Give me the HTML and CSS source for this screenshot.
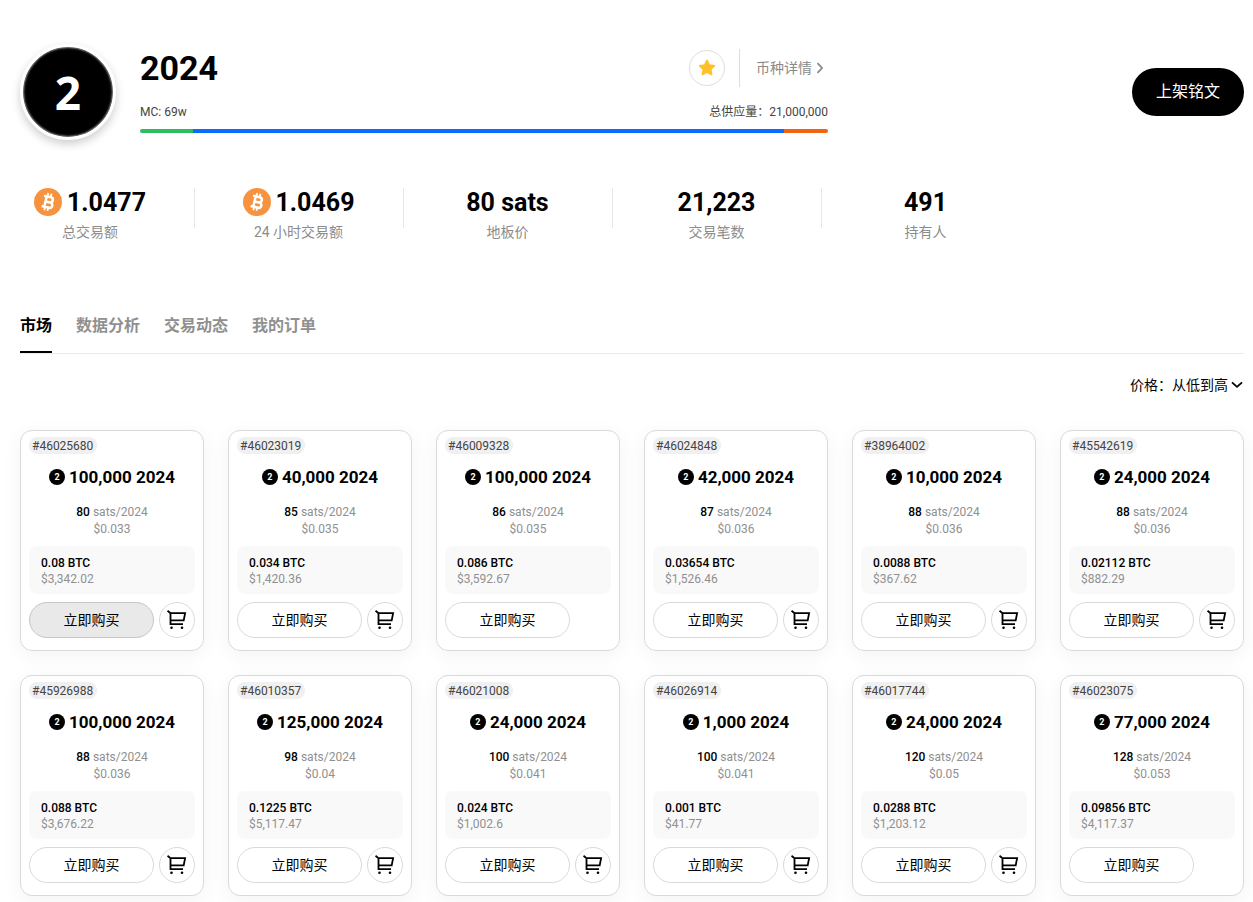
FILE: index.html
```html
<!DOCTYPE html>
<html lang="zh-CN">
<head>
<meta charset="utf-8">
<meta name="viewport" content="width=device-width, initial-scale=1">
<title>2024</title>
<link rel="stylesheet" href="styles.css">
</head>
<body>
<svg class="defs" width="0" height="0" aria-hidden="true">
  <symbol id="cart" viewBox="0 0 20 20">
    <path d="M.5 .8l3 2.400v11h12.500M3.500 3.200h14.600l-1.400 7.100H3.500" fill="none" stroke="currentColor" stroke-width="1.800"/>
    <circle cx="4.500" cy="17.800" r="1.300" fill="currentColor"/><circle cx="15" cy="17.800" r="1.300" fill="currentColor"/>
  </symbol>
  <symbol id="btc" viewBox="0 0 28 28">
    <circle cx="14" cy="14" r="14" fill="#f7923f"/>
    <g transform="rotate(13 14 14) translate(-1.400 -1.400) scale(1.100)" fill="none" stroke="#fff">
      <path d="M9.200 9.200h6.300a2.400 2.400 0 0 1 0 4.800h-3.700M9.200 18.900h6.900a2.450 2.450 0 0 0 0-4.900h-4.300M11.700 9v10" stroke-width="2.300"/>
      <path d="M12.400 6v3M15.400 6v3M12.400 19v3M15.400 19v3" stroke-width="1.600"/>
    </g>
  </symbol>
</svg>
<div class="page">
  <header class="hero">
    <div class="coin-logo">2</div>
    <div class="hero-main">
      <div class="hero-top">
        <h1>2024</h1>
        <button class="star" aria-label="收藏"><svg width="18" height="18" viewBox="0 0 18 18"><path d="M9 1.300l2.300 4.700 5.200.7-3.800 3.600.9 5.200L9 13l-4.600 2.500.9-5.200L1.500 6.700l5.200-.7z" fill="#ffc02a" stroke="#ffc02a" stroke-width="1.600" stroke-linejoin="round"/></svg></button>
        <a class="detail" href="#">币种详情<svg width="8" height="12" viewBox="0 0 8 12"><path d="M1.500 1.200L6 6l-4.500 4.800" fill="none" stroke="currentColor" stroke-width="1.800"/></svg></a>
      </div>
      <div class="meta"><span>MC: 69w</span><span>总供应量：21,000,000</span></div>
      <div class="bar"><i class="bar-green"></i><i class="bar-blue"></i><i class="bar-orange"></i></div>
    </div>
    <button class="list-btn">上架铭文</button>
  </header>

  <section class="stats">
    <div class="stat"><strong><svg width="28" height="28"><use href="#btc"/></svg>1.0477</strong><span>总交易额</span></div>
    <div class="stat"><strong><svg width="28" height="28"><use href="#btc"/></svg>1.0469</strong><span>24 小时交易额</span></div>
    <div class="stat"><strong>80 sats</strong><span>地板价</span></div>
    <div class="stat"><strong>21,223</strong><span>交易笔数</span></div>
    <div class="stat"><strong>491</strong><span>持有人</span></div>
  </section>

  <nav class="tabs">
    <a class="tab active" href="#">市场</a><a class="tab" href="#">数据分析</a><a class="tab" href="#">交易动态</a><a class="tab" href="#">我的订单</a>
  </nav>

  <div class="toolbar">
    <select class="sort" aria-label="排序"><option>价格：从低到高</option><option>价格：从高到低</option></select>
    <svg width="12" height="8" viewBox="0 0 12 8" aria-hidden="true"><path d="M1 1.300l5 4.500 5-4.500" fill="none" stroke="#000" stroke-width="1.800"/></svg>
  </div>

  <main class="grid" id="grid"></main>
</div>
<script src="cards.js"></script>
</body>
</html>
```
FILE: cards.js
```js
// id, amount, unit price in sats, unit price in dollars, total BTC, total dollars, can be added to cart
const listings = [
  ["46025680", "100,000", "80", "0.033", "0.08", "3,342.02", true],
  ["46023019", "40,000", "85", "0.035", "0.034", "1,420.36", true],
  ["46009328", "100,000", "86", "0.035", "0.086", "3,592.67", false],
  ["46024848", "42,000", "87", "0.036", "0.03654", "1,526.46", true],
  ["38964002", "10,000", "88", "0.036", "0.0088", "367.62", true],
  ["45542619", "24,000", "88", "0.036", "0.02112", "882.29", true],
  ["45926988", "100,000", "88", "0.036", "0.088", "3,676.22", true],
  ["46010357", "125,000", "98", "0.04", "0.1225", "5,117.47", true],
  ["46021008", "24,000", "100", "0.041", "0.024", "1,002.6", true],
  ["46026914", "1,000", "100", "0.041", "0.001", "41.77", true],
  ["46017744", "24,000", "120", "0.05", "0.0288", "1,203.12", true],
  ["46023075", "77,000", "128", "0.053", "0.09856", "4,117.37", false]
];

document.getElementById("grid").innerHTML = listings.map(([id, amount, sats, usd, btc, total, cart], i) => `
  <article class="card">
    <span class="tag">#${id}</span>
    <h2><span class="mini-logo">2</span>${amount} 2024</h2>
    <div class="unit"><b>${sats}</b> sats/2024</div>
    <div class="unit">$${usd}</div>
    <div class="total"><b>${btc} BTC</b><span>$${total}</span></div>
    <div class="actions">
      <button class="buy${i === 0 ? " pressed" : ""}">立即购买</button>
      ${cart ? '<button class="cart" aria-label="加入购物车"><svg width="20" height="20"><use href="#cart"/></svg></button>' : '<span class="cart-space"></span>'}
    </div>
  </article>`).join("");
```
FILE: styles.css
```css
* { box-sizing: border-box; }
body {
  margin: 0;
  background: #fff;
  color: #000;
  font: 14px/20px Roboto, "Noto Sans CJK SC", sans-serif;
}
button, select { font: inherit; color: inherit; padding: 0; cursor: pointer; }
a { color: inherit; text-decoration: none; }
svg { display: block; flex: none; }
.defs { position: absolute; }
.page { padding: 44px 9px 6px 20px; }

.hero { display: flex; align-items: center; }
.coin-logo {
  width: 96px; height: 96px; flex: none;
  display: flex; align-items: center; justify-content: center;
  border: 3px solid #fff; border-radius: 50%;
  background: #000 padding-box;
  box-shadow: 0 4px 10px rgba(0, 0, 0, .2), inset 0 0 2px 1px #888;
  color: #fff; font: bold 46px/46px "Noto Sans", sans-serif;
}
.hero-main { flex: 0 1 688px; margin: 0 24px; padding-bottom: 2px; }
.hero-top { display: flex; align-items: center; height: 38px; }
h1 { flex: 1; margin: 0; font-size: 34px; line-height: 38px; }
.star {
  width: 36px; height: 36px;
  display: flex; align-items: center; justify-content: center;
  border: 1px solid #ddd; border-radius: 50%; background: #fff;
}
.detail {
  display: flex; align-items: center; gap: 4px;
  height: 38px; margin-left: 14px; padding: 0 4px 0 16px;
  border-left: 1px solid #ddd; color: #8a8a8a;
}
.meta {
  display: flex; justify-content: space-between;
  margin: 15px 0 7px; font-size: 12px; color: #444;
}
.bar { display: flex; height: 4px; border-radius: 2px; overflow: hidden; }
.bar-green { flex: 53; background: #2cbd60; }
.bar-blue { flex: 591; background: #0a6bff; }
.bar-orange { flex: 44; background: #f2640f; }
.list-btn {
  width: 112px; height: 48px; margin-left: auto; flex: none;
  border: 0; border-radius: 24px; background: #000; color: #fff; font-size: 16px;
}

.stats { display: flex; margin-top: 48px; }
.stat {
  display: flex; flex-direction: column; align-items: center; gap: 4px;
  width: 140px; color: #8c8c8c; white-space: nowrap;
}
.stat + .stat {
  width: 175px; margin-left: 34px; padding-left: 34px;
  background: linear-gradient(#e6e6e6, #e6e6e6) 0 0 / 1px 40px no-repeat;
}
.stat strong {
  display: flex; align-items: flex-start; gap: 5px;
  color: #000; font-size: 25px; line-height: 30px;
}

.tabs {
  display: flex; gap: 24px; margin-top: 72px;
  border-bottom: 1px solid #ebebeb;
  font-size: 16px; line-height: 24px; font-weight: bold; color: #909090;
}
.tab { padding-bottom: 13px; border-bottom: 2px solid transparent; }
.tab.active { color: #000; border-color: #000; }

.toolbar { display: flex; align-items: center; justify-content: flex-end; gap: 3px; padding: 21px 1px 35px 0; }
.sort { appearance: none; border: 0; background: none; }

.grid { display: grid; grid-template-columns: repeat(6, minmax(0, 1fr)); gap: 24px; }
.card {
  padding: 6px 8px 12px;
  border: 1px solid #dadada; border-radius: 12px; background: #fff;
  box-shadow: 0 4px 20px rgba(0, 0, 0, .05);
}
.tag {
  display: block; width: max-content; padding: 1px 4px 0 3px;
  border-radius: 8px; background: #f0f0f0;
  color: #444; font-size: 12px; line-height: 16px;
}
h2 {
  display: flex; align-items: center; justify-content: center; gap: 4px;
  margin: 11px 0 15px; font-size: 17px; line-height: 24px; white-space: nowrap;
}
.mini-logo {
  width: 16px; height: 16px; border-radius: 50%;
  background: #000; color: #fff; font-size: 9px; line-height: 16px; text-align: center;
}
.unit { color: #909090; font-size: 12px; line-height: 17px; text-align: center; }
.unit b, .total b { color: #000; font-weight: 500; }
.total {
  display: grid; margin: 8px 0; padding: 9px 12px 7px;
  border-radius: 8px; background: #f9f9f9;
  color: #909090; font-size: 12px; line-height: 16px;
}
.actions { display: flex; gap: 5px; }
.buy { flex: 1; height: 36px; border: 1px solid #dadada; border-radius: 18px; background: #fff; }
.buy.pressed { background: #e9e9e9; border-color: #c6c6c6; }
.cart {
  width: 36px; height: 36px;
  display: flex; align-items: center; justify-content: center;
  border: 1px solid #dadada; border-radius: 50%; background: #fff;
}
.cart-space { width: 36px; }
```
